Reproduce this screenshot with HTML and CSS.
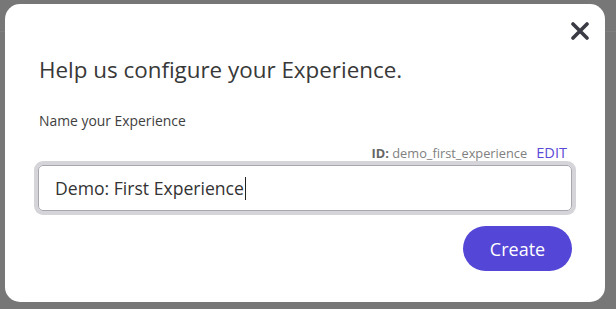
FILE: index.html
```html
<!DOCTYPE html>
<html lang="en">
  <head>
    <meta charset="UTF-8" />
    <title>Configure Experience</title>
    <link rel="stylesheet" href="styles.css">
  </head>
  <body>
    <div class="modal">
      <button class="close-btn" aria-label="Close">
        <svg width="20" height="18" viewBox="0 0 20 18">
          <path d="M3 2 L17 16 M17 2 L3 16" stroke="#3b3b45" stroke-width="3.6" stroke-linecap="round" fill="none" />
        </svg>
      </button>

      <h1 class="title">Help us configure your Experience.</h1>
      <label class="field-label" for="expName">Name your Experience</label>

      <div class="id-row">
        <span class="id-text"><b>ID:</b> demo_first_experience</span>
        <a class="edit-link" href="#">EDIT</a>
      </div>

      <div class="input-wrap">
        <span class="input-value">Demo: First Experience</span><span class="caret"></span>
      </div>

      <div class="actions">
        <button class="create-btn">Create</button>
      </div>
    </div>
  </body>
</html>
```

FILE: styles.css
```css
body {
  margin: 0;
  height: 309px;
  overflow: hidden;
  background-color: #777777;
  background-image: linear-gradient(#7f7f7f, #7f7f7f);
  background-size: 100% 1px;
  background-position: 0 31px;
  background-repeat: no-repeat;
  font-family: "Open Sans", "Noto Sans", sans-serif;
}

.modal {
  position: relative;
  box-sizing: border-box;
  width: 600px;
  height: 298px;
  margin: 4px 0 0 5px;
  padding: 52px 33px 0 33px;
  background-color: #ffffff;
  border-radius: 15px;
}

.close-btn {
  position: absolute;
  top: 18px;
  right: 15px;
  padding: 0;
  border: none;
  background: none;
  line-height: 0;
  cursor: pointer;
}

.title {
  margin: 0 0 0 1px;
  font-size: 22.4px;
  line-height: 28px;
  font-weight: 400;
  color: #383838;
}

.field-label {
  display: block;
  margin-top: 27px;
  margin-left: 1px;
  font-size: 13.9px;
  line-height: 20px;
  color: #3e3e3e;
}

.id-row {
  display: flex;
  justify-content: flex-end;
  align-items: baseline;
  gap: 9px;
  margin-top: 12px;
  padding-right: 5px;
  line-height: 18px;
}

.id-text {
  font-size: 12.8px;
  color: #808080;
}

.id-text b {
  color: #666666;
}

.edit-link {
  font-size: 14.6px;
  color: #5a4bd8;
  text-decoration: none;
}

.input-wrap {
  display: flex;
  align-items: center;
  box-sizing: border-box;
  height: 46px;
  margin-top: 3px;
  padding-left: 16px;
  border: 1px solid #a7a7ae;
  border-radius: 5px;
  box-shadow: 0 0 0 4px #d4d4d9;
  font-size: 17.6px;
  color: #333333;
}

.caret {
  width: 1px;
  height: 23px;
  margin-left: 1px;
  background-color: #222222;
}

.actions {
  display: flex;
  justify-content: flex-end;
  margin-top: 15px;
}

.create-btn {
  width: 109px;
  height: 45px;
  border: none;
  border-radius: 23px;
  background-color: #5446d6;
  color: #ffffff;
  font-family: inherit;
  font-size: 18px;
  cursor: pointer;
}
```
